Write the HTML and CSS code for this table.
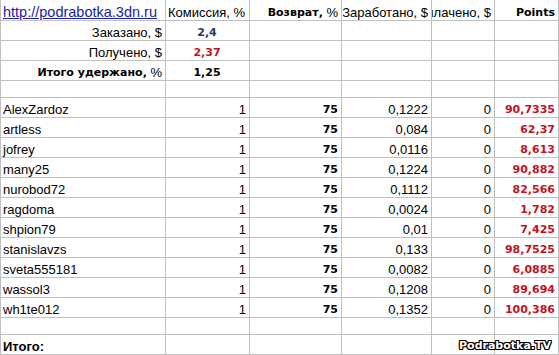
FILE: index.html
```
<!DOCTYPE html>
<html lang="ru">
<head>
<meta charset="utf-8">
<title>Points</title>
<link rel="stylesheet" href="styles.css">
</head>
<body>
<div class="sheet">
  <div class="c"><a class="link" href="#">http://podrabotka.3dn.ru</a></div>
  <div class="c">Комиссия, %</div>
  <div class="c r"><span class="b">Возврат,</span>&nbsp;%</div>
  <div class="c r">Заработано, $</div>
  <div class="c r clip"><span>Выплачено, $</span></div>
  <div class="c r b">Points</div>

  <div class="c r">Заказано, $</div>
  <div class="c m b blue">2,4</div>
  <div class="c"></div><div class="c"></div><div class="c"></div><div class="c"></div>

  <div class="c r">Получено, $</div>
  <div class="c m b red">2,37</div>
  <div class="c"></div><div class="c"></div><div class="c"></div><div class="c"></div>

  <div class="c r"><span class="b">Итого удержано,</span>&nbsp;%</div>
  <div class="c m b">1,25</div>
  <div class="c"></div><div class="c"></div><div class="c"></div><div class="c"></div>

  <div class="c"></div><div class="c"></div><div class="c"></div><div class="c"></div><div class="c"></div><div class="c"></div>

  <div class="c">AlexZardoz</div><div class="c r">1</div><div class="c r b">75</div><div class="c r">0,1222</div><div class="c r">0</div><div class="c r b red">90,7335</div>
  <div class="c">artless</div><div class="c r">1</div><div class="c r b">75</div><div class="c r">0,084</div><div class="c r">0</div><div class="c r b red">62,37</div>
  <div class="c">jofrey</div><div class="c r">1</div><div class="c r b">75</div><div class="c r">0,0116</div><div class="c r">0</div><div class="c r b red">8,613</div>
  <div class="c">many25</div><div class="c r">1</div><div class="c r b">75</div><div class="c r">0,1224</div><div class="c r">0</div><div class="c r b red">90,882</div>
  <div class="c">nurobod72</div><div class="c r">1</div><div class="c r b">75</div><div class="c r">0,1112</div><div class="c r">0</div><div class="c r b red">82,566</div>
  <div class="c">ragdoma</div><div class="c r">1</div><div class="c r b">75</div><div class="c r">0,0024</div><div class="c r">0</div><div class="c r b red">1,782</div>
  <div class="c">shpion79</div><div class="c r">1</div><div class="c r b">75</div><div class="c r">0,01</div><div class="c r">0</div><div class="c r b red">7,425</div>
  <div class="c">stanislavzs</div><div class="c r">1</div><div class="c r b">75</div><div class="c r">0,133</div><div class="c r">0</div><div class="c r b red">98,7525</div>
  <div class="c">sveta555181</div><div class="c r">1</div><div class="c r b">75</div><div class="c r">0,0082</div><div class="c r">0</div><div class="c r b red">6,0885</div>
  <div class="c">wassol3</div><div class="c r">1</div><div class="c r b">75</div><div class="c r">0,1208</div><div class="c r">0</div><div class="c r b red">89,694</div>
  <div class="c">wh1te012</div><div class="c r">1</div><div class="c r b">75</div><div class="c r">0,1352</div><div class="c r">0</div><div class="c r b red">100,386</div>

  <div class="c"></div><div class="c"></div><div class="c"></div><div class="c"></div><div class="c"></div><div class="c"></div>

  <div class="c total">Итого:</div><div class="c"></div><div class="c"></div><div class="c"></div><div class="c"></div><div class="c"></div>

  <div class="watermark">Podrabotka.TV</div>
</div>
</body>
</html>
```
FILE: styles.css
```
html, body {
  margin: 0;
  padding: 0;
  background: #ffffff;
}

.sheet {
  position: relative;
  width: 559px;
  height: 355px;
  box-sizing: border-box;
  border-left: 1px solid #c0c0c0;
  display: grid;
  grid-template-columns: 165px 84px 92px 90px 63px 64px;
  grid-template-rows: 21px 20px 20px 20px 17px repeat(11, 20px) 17px 20px;
  font-family: "Liberation Sans", Arial, sans-serif;
  font-size: 13px;
  color: #000;
  overflow: hidden;
}

.c {
  box-sizing: border-box;
  border-right: 1px solid #c0c0c0;
  border-bottom: 1px solid #c0c0c0;
  display: flex;
  align-items: flex-end;
  justify-content: flex-start;
  padding: 0 3px 0 2px;
  line-height: 15px;
  white-space: nowrap;
  overflow: hidden;
}

.r { justify-content: flex-end; }
.m { justify-content: center; }

.clip { padding-right: 3px; }
.clip span { flex-shrink: 0; }

.b {
  font-family: "DejaVu Sans", Verdana, sans-serif;
  font-weight: bold;
  font-size: 11px;
}

.blue { color: #1f3a64; }
.red { color: #c0141e; }

.link {
  color: #1c1ca6;
  text-decoration: underline;
  font-size: 14.5px;
}

.total {
  font-weight: bold;
  font-size: 13px;
}

.watermark {
  position: absolute;
  right: 8px;
  bottom: 3px;
  font-family: "DejaVu Sans", Verdana, sans-serif;
  font-weight: bold;
  font-size: 11px;
  line-height: 13px;
  color: #ffffff;
  text-shadow:
    1px 0 0 #000, -1px 0 0 #000, 0 1px 0 #000, 0 -1px 0 #000,
    1px 1px 0 #000, -1px -1px 0 #000, 1px -1px 0 #000, -1px 1px 0 #000;
}
```
